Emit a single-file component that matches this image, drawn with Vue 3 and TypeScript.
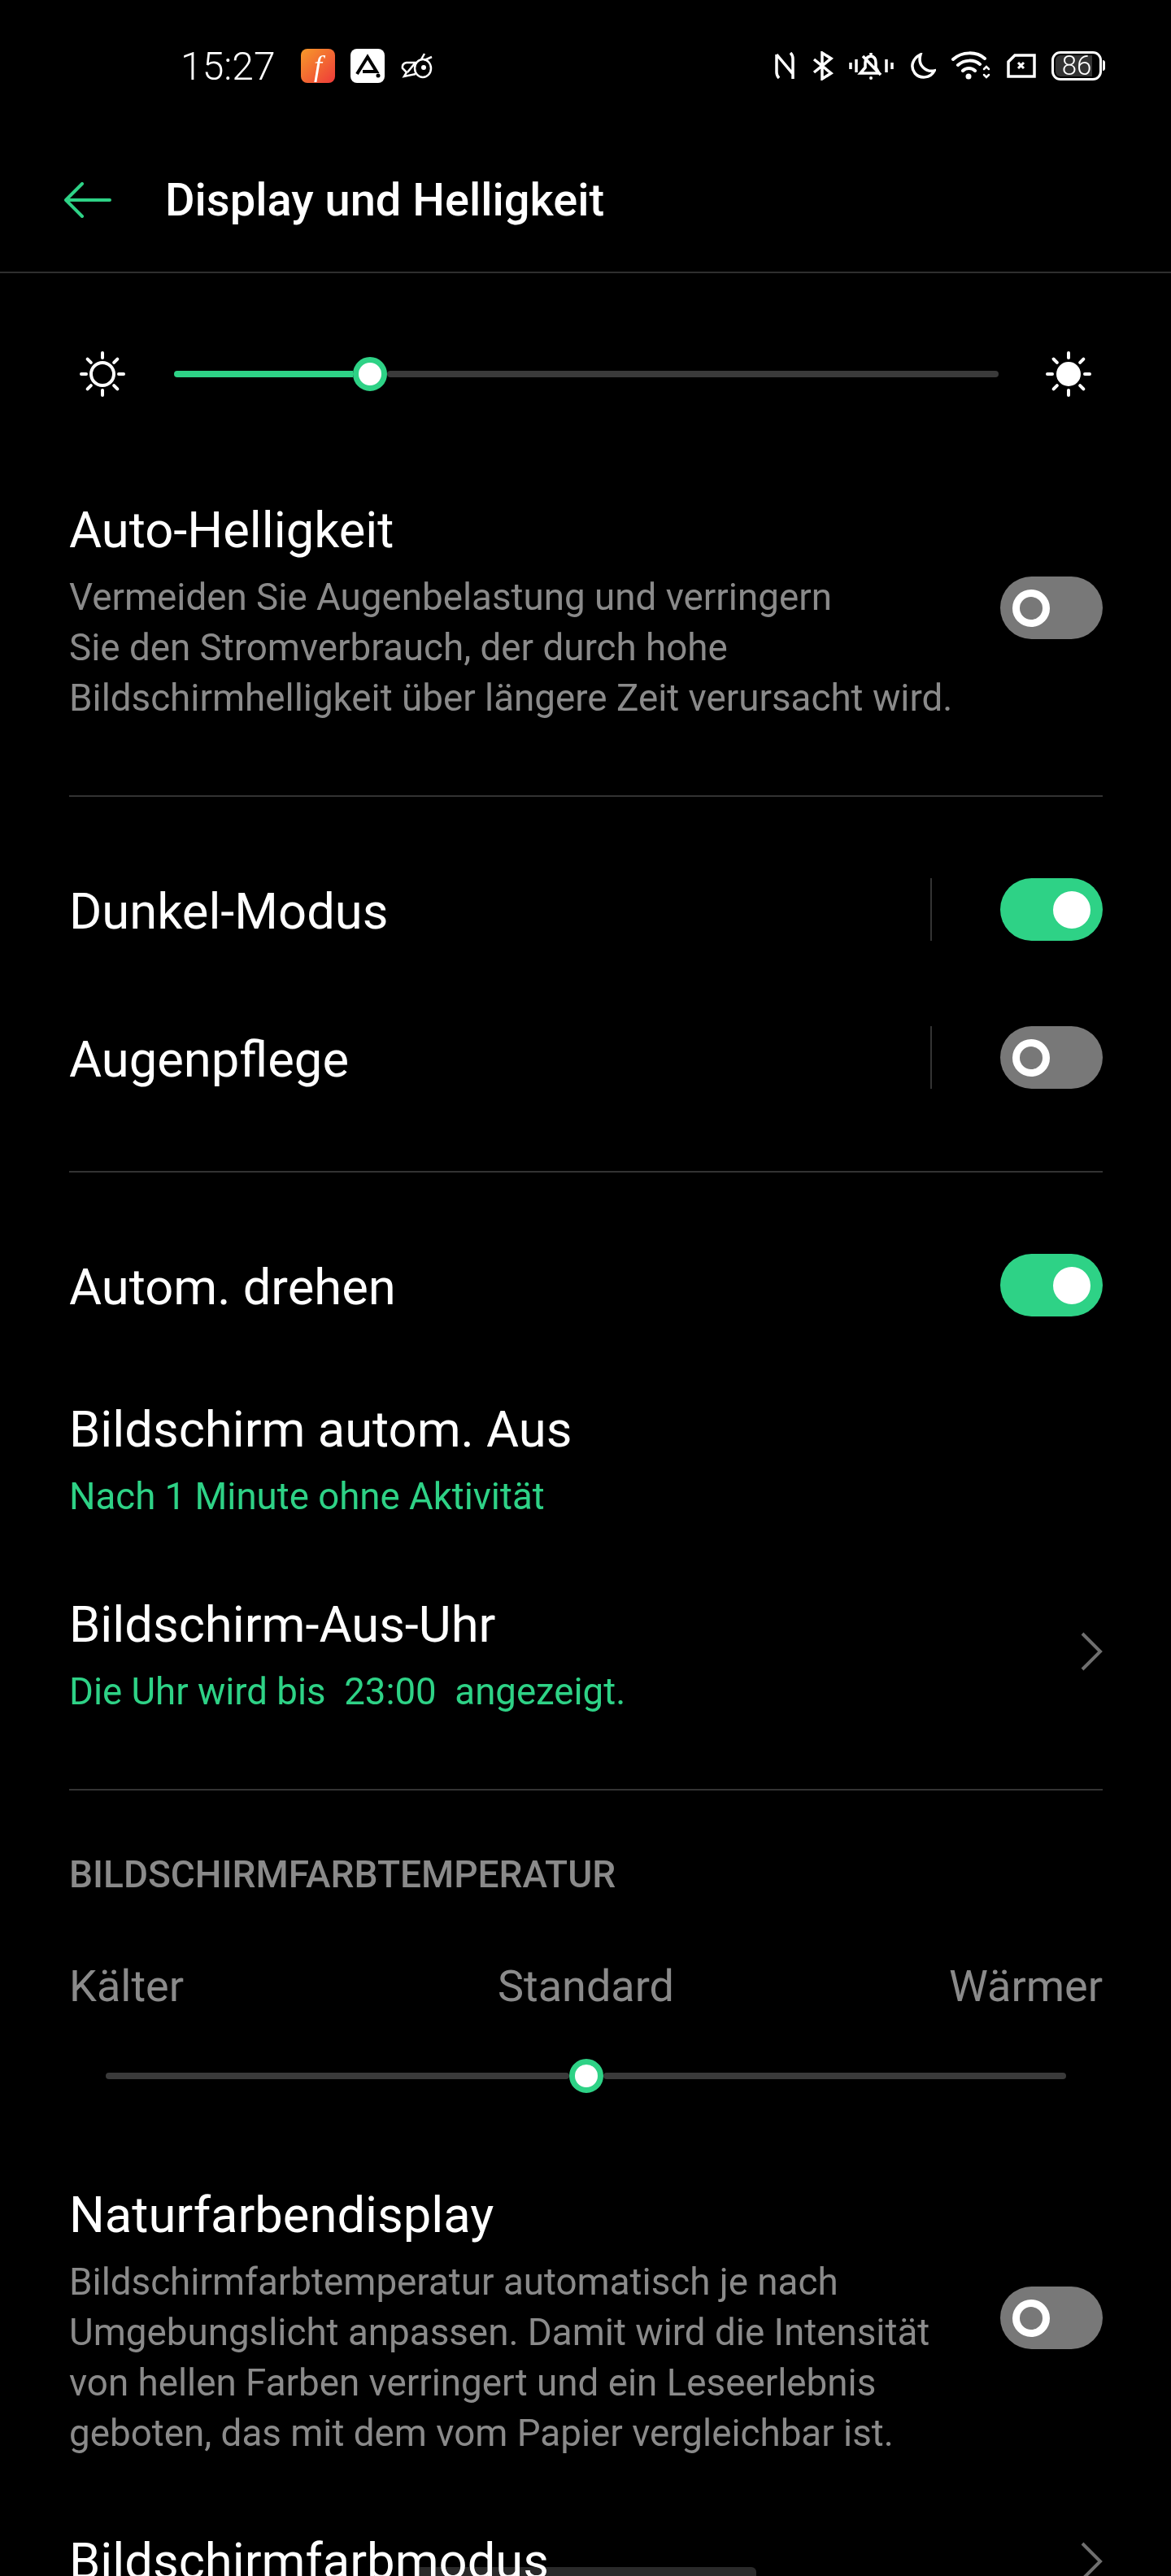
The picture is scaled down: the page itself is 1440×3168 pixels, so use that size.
<script setup lang="ts">
const sunRays = [0, 45, 90, 135, 180, 225, 270, 315];
const autoLines = [
  "Vermeiden Sie Augenbelastung und verringern",
  "Sie den Stromverbrauch, der durch hohe",
  "Bildschirmhelligkeit über längere Zeit verursacht wird.",
];
const naturLines = [
  "Bildschirmfarbtemperatur automatisch je nach",
  "Umgebungslicht anpassen. Damit wird die Intensität",
  "von hellen Farben verringert und ein Leseerlebnis",
  "geboten, das mit dem vom Papier vergleichbar ist.",
];
</script>

<template>
  <div class="screen">
    <div class="status">
      <span class="time">15:27</span>
      <span class="app flash">f</span>
      <svg class="app" viewBox="0 0 42 42">
        <rect width="42" height="42" rx="8" fill="#fff" />
        <path d="M8 31 21 10 32 28H15" fill="none" stroke="#000" stroke-width="4" />
        <circle cx="34" cy="33" r="2.5" fill="#000" />
      </svg>
      <svg class="bee" viewBox="0 0 40 32" fill="none" stroke="#fff" stroke-width="2.5">
        <ellipse cx="27" cy="19" rx="10" ry="11" />
        <circle cx="28" cy="18" r="3" fill="#fff" stroke="none" />
        <path d="M19 12H7Q1 13 2 19L7 24 4 29 18 26M8 24 17 13" />
        <path d="M25 8 29 1M29 9 38 5" />
      </svg>
      <div class="status-right">
        <svg width="26" height="34" viewBox="0 0 26 34" fill="none" stroke="#fff" stroke-width="3.5">
          <path d="M3 3 23 27V33M3 3V25Q3 29 6 32M23 27V8Q23 4 20 1" />
        </svg>
        <svg width="27" height="36" viewBox="0 0 27 36" fill="none" stroke="#fff" stroke-width="3.5">
          <path d="M3 10 24 27 13 34V2L24 9 3 26" />
        </svg>
        <svg width="55" height="36" viewBox="0 0 55 36" fill="none" stroke="#fff" stroke-width="3.5">
          <path d="M2 14V22M9 10V26M46 10V26M53 14V22" />
          <path d="M27 2V5M18 27H37L33 20V14Q33 7 27 6 20 7 20 14V20L14 27ZM17 6 39 29" />
          <circle cx="27" cy="33" r="2" fill="#fff" stroke="none" />
        </svg>
        <svg width="32" height="32" viewBox="0 0 32 32" fill="none" stroke="#fff" stroke-width="3.5">
          <path d="M13 2C3 7 0 17 6 25 12 32 25 32 30 22 19 24 9 15 13 2Z" />
        </svg>
        <svg width="48" height="36" viewBox="0 0 48 36" fill="none" stroke="#fff" stroke-width="4" stroke-linecap="round">
          <path d="M2 10C13 0 31 0 41 9M8 17C16 10 28 10 35 16M14 24C18 20 25 20 29 24" />
          <circle cx="21" cy="31" r="3.5" fill="#fff" stroke="none" />
          <path stroke-width="2.5" d="M40 22 43 19 46 22M40 29 43 32 46 29" />
        </svg>
        <svg width="36" height="30" viewBox="0 0 36 30" fill="none" stroke="#fff" stroke-width="3.5">
          <path d="M10 2H34V28H2V10Z" />
          <path stroke-width="3" d="M14 11 21 18M21 11 14 18" />
        </svg>
        <div class="battery">86</div>
      </div>
    </div>

    <header class="header">
      <svg width="58" height="44" viewBox="0 0 58 44" fill="none" stroke="#2ed286" stroke-width="4" stroke-linecap="round" stroke-linejoin="round">
        <path d="M22 2 2 22 22 42M2 22H56" />
      </svg>
      <h1 class="page-title">Display und Helligkeit</h1>
    </header>

    <div class="brightness">
      <svg class="sun" viewBox="0 0 56 56" fill="none" stroke="#fff" stroke-width="4" stroke-linecap="round">
        <circle cx="28" cy="28" r="14" />
        <path v-for="r in sunRays" :key="r" d="M28 8V2" :transform="`rotate(${r} 28 28)`" />
      </svg>
      <div class="slider bright-slider">
        <div class="fill"></div>
        <div class="thumb"></div>
        <div class="rest"></div>
      </div>
      <svg class="sun" viewBox="0 0 56 56" fill="#fff" stroke="#fff" stroke-width="4" stroke-linecap="round">
        <circle cx="28" cy="28" r="13" />
        <path v-for="r in sunRays" :key="r" d="M28 8V2" :transform="`rotate(${r} 28 28)`" />
      </svg>
    </div>

    <section class="row auto-row">
      <div class="texts">
        <div class="title">Auto-Helligkeit</div>
        <div class="desc">
          <div v-for="line in autoLines" :key="line">{{ line }}</div>
        </div>
      </div>
      <div class="toggle"></div>
    </section>
    <div class="divider"></div>

    <section class="row plain first">
      <div class="title">Dunkel-Modus</div>
      <div class="vline"></div>
      <div class="toggle on"></div>
    </section>
    <section class="row plain">
      <div class="title">Augenpflege</div>
      <div class="vline"></div>
      <div class="toggle"></div>
    </section>
    <div class="divider gap-top"></div>

    <section class="row plain first">
      <div class="title">Autom. drehen</div>
      <div class="toggle on"></div>
    </section>
    <section class="row two-line">
      <div class="texts">
        <div class="title">Bildschirm autom. Aus</div>
        <div class="green">Nach 1 Minute ohne Aktivität</div>
      </div>
    </section>
    <section class="row two-line uhr">
      <div class="texts">
        <div class="title">Bildschirm-Aus-Uhr</div>
        <div class="green">Die Uhr wird bis&nbsp; 23:00&nbsp; angezeigt.</div>
      </div>
      <svg class="chevron" width="28" height="48" viewBox="0 0 28 48" fill="none" stroke="#6f6f6f" stroke-width="4">
        <path d="M3 2 25 24 3 46" />
      </svg>
    </section>
    <div class="divider uhr-gap"></div>

    <div class="caption">BILDSCHIRMFARBTEMPERATUR</div>
    <div class="temp-labels">
      <span>Kälter</span>
      <span>Standard</span>
      <span class="warm">Wärmer</span>
    </div>
    <div class="slider temp-slider">
      <div class="rest"></div>
      <div class="thumb"></div>
      <div class="rest"></div>
    </div>

    <section class="row natur-row">
      <div class="texts">
        <div class="title">Naturfarbendisplay</div>
        <div class="desc">
          <div v-for="line in naturLines" :key="line">{{ line }}</div>
        </div>
      </div>
      <div class="toggle"></div>
    </section>

    <section class="row modus-row">
      <div class="title">Bildschirmfarbmodus</div>
      <svg class="chevron" width="28" height="48" viewBox="0 0 28 48" fill="none" stroke="#6f6f6f" stroke-width="4">
        <path d="M3 2 25 24 3 46" />
      </svg>
    </section>

    <div class="nav-pill"></div>
  </div>
</template>

<style>
html,
body {
  background: #000;
}
</style>

<style scoped>
.screen {
  position: relative;
  width: 1440px;
  height: 3168px;
  overflow: hidden;
  background: #000;
  color: #fff;
  font-family: Roboto, "Liberation Sans", sans-serif;
}

.status {
  display: flex;
  align-items: center;
  height: 162px;
  padding: 0 85px 0 222px;
  box-sizing: border-box;
}

.time {
  width: 148px;
  font-size: 48px;
  font-weight: 300;
}

.app {
  width: 42px;
  height: 42px;
  margin-right: 19px;
}

.flash {
  border-radius: 8px;
  background: linear-gradient(135deg, #f79a2a, #ee3a3a);
  font-family: "Liberation Serif", serif;
  font-size: 36px;
  font-style: italic;
  line-height: 42px;
  text-align: center;
}

.bee {
  width: 40px;
  height: 32px;
  margin-left: 1px;
}

.status-right {
  display: flex;
  align-items: center;
  gap: 19.5px;
  margin-left: auto;
}

.battery {
  position: relative;
  box-sizing: border-box;
  width: 62px;
  height: 36px;
  border: 3.5px solid #fff;
  border-radius: 11px;
  background: linear-gradient(90deg, #333 86%, #000 86%) content-box;
  padding: 2px;
  font-size: 33px;
  font-weight: 300;
  line-height: 25px;
  text-align: center;
}

.battery::after {
  content: "";
  position: absolute;
  top: 8px;
  right: -7px;
  width: 3px;
  height: 13px;
  border-radius: 0 3px 3px 0;
  background: #fff;
}

.header {
  display: flex;
  align-items: center;
  gap: 66px;
  height: 168px;
  padding: 0 0 4px 79px;
  border-bottom: 2px solid #2e2e2e;
}

.page-title {
  margin: 0;
  font-size: 56px;
  font-weight: 500;
}

.brightness {
  display: flex;
  align-items: center;
  height: 246px;
  padding: 2px 98px 0;
  box-sizing: border-box;
}

.sun {
  flex: none;
  width: 56px;
  height: 56px;
}

.slider {
  display: flex;
  align-items: center;
}

.bright-slider {
  flex: 1;
  margin: 0 58px 0 60px;
}

.fill {
  width: 220px;
  height: 8px;
  border-radius: 4px 0 0 4px;
  background: #2ed286;
}

.rest {
  flex: 1;
  height: 8px;
  border-radius: 4px;
  background: #3a3a3a;
}

.thumb {
  flex: none;
  box-sizing: border-box;
  width: 42px;
  height: 42px;
  border: 7px solid #2ed286;
  border-radius: 50%;
  background: #fff;
}

.row {
  display: flex;
  align-items: center;
  justify-content: space-between;
  margin: 0 84px 0 85px;
}

.title {
  font-size: 61.5px;
  line-height: 80px;
}

.desc {
  margin-top: 12px;
  color: #8a8a8a;
  font-size: 45.75px;
  line-height: 62px;
  white-space: nowrap;
}

.green {
  margin-top: 12px;
  color: #2ed286;
  font-size: 45.6px;
  line-height: 62px;
}

.toggle {
  position: relative;
  flex: none;
  width: 126px;
  height: 77px;
  border-radius: 39px;
  background: #787878;
}

.toggle::after {
  content: "";
  position: absolute;
  top: 16px;
  left: 15px;
  box-sizing: border-box;
  width: 46px;
  height: 46px;
  border: 9px solid #fff;
  border-radius: 50%;
}

.toggle.on {
  background: #2ed286;
}

.toggle.on::after {
  left: 65px;
  background: #fff;
}

.auto-row {
  margin-top: 30px;
  padding-bottom: 88px;
}

.auto-row .toggle,
.natur-row .toggle {
  margin-bottom: 8px;
}

.divider {
  height: 2px;
  margin: 0 84px 0 85px;
  background: #333;
}

.plain {
  height: 182px;
}

.plain .title {
  flex: 1;
  padding-top: 6px;
}

.first {
  margin-top: 47px;
}

.vline {
  width: 2px;
  height: 77px;
  margin-right: 84px;
  background: #333;
}

.gap-top {
  margin-top: 49px;
}

.two-line {
  margin-top: 47px;
}

.uhr {
  margin-top: 86px;
}

.uhr .chevron {
  margin-bottom: 8px;
}

.uhr-gap {
  margin-top: 88px;
}

.caption {
  margin: 75px 85px 0;
  color: #8a8a8a;
  font-size: 46px;
  font-weight: 500;
  line-height: 56px;
}

.temp-labels {
  display: grid;
  grid-template-columns: 1fr auto 1fr;
  margin: 80px 84px 0 85px;
  color: #8a8a8a;
  font-size: 54px;
  line-height: 60px;
}

.warm {
  text-align: right;
}

.temp-slider {
  margin: 59px 129px 0 130px;
}

.natur-row {
  margin-top: 110px;
}

.modus-row {
  margin-top: 86px;
}

.nav-pill {
  position: absolute;
  bottom: 0;
  left: 510px;
  width: 420px;
  height: 11px;
  border-radius: 6px 6px 0 0;
  background: #2a2a2a;
  mix-blend-mode: lighten;
}
</style>
